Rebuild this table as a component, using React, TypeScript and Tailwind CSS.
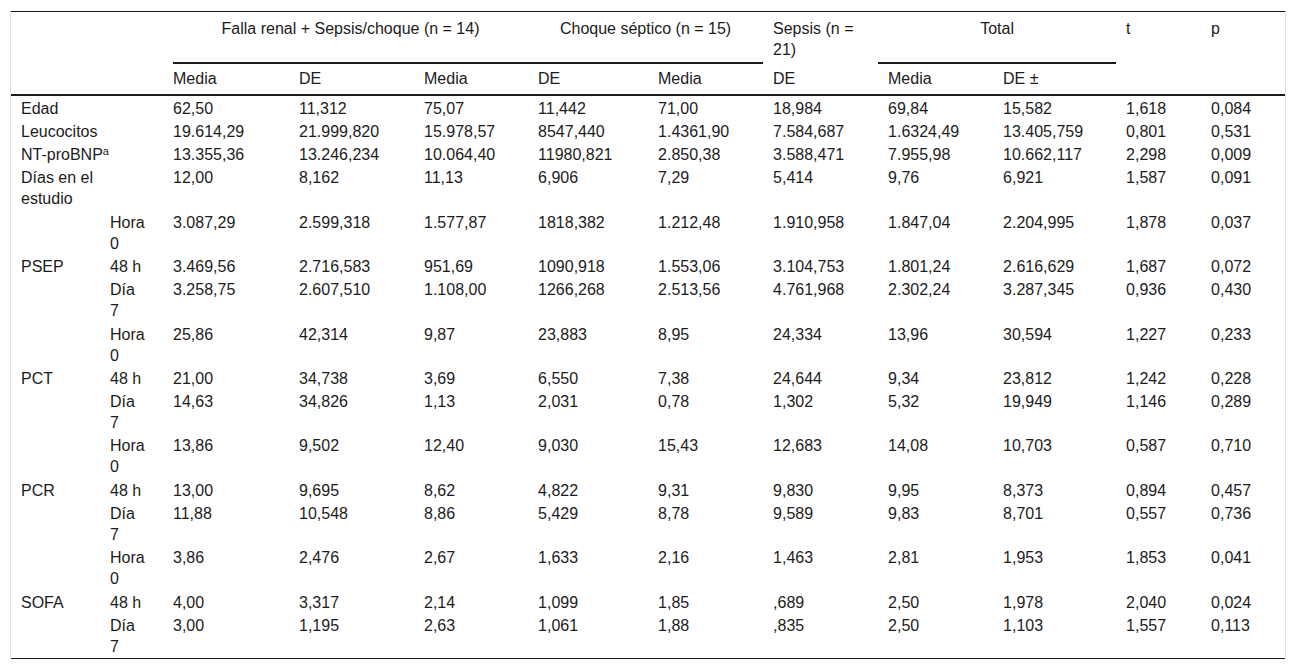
const cols = [
  { w: "w-[89px]", pad: "pl-[10px] pr-[4px]" },
  { w: "w-[73px]", pad: "pl-[10px] pr-[29px]" },
  { w: "w-[116px]", pad: "pl-0 pr-[8px]" },
  { w: "w-[125px]", pad: "pl-[10px] pr-[8px]" },
  { w: "w-[114px]", pad: "pl-[10px] pr-[8px]" },
  { w: "w-[120px]", pad: "pl-[10px] pr-[8px]" },
  { w: "w-[115px]", pad: "pl-[10px] pr-[8px]" },
  { w: "w-[115px]", pad: "pl-[10px] pr-[8px]" },
  { w: "w-[115px]", pad: "pl-[10px] pr-[8px]" },
  { w: "w-[123px]", pad: "pl-[10px] pr-[8px]" },
  { w: "w-[85px]", pad: "pl-[10px] pr-[8px]" },
  { w: "w-[84px]", pad: "pl-[10px] pr-[8px]" },
];

type Row = { label?: string; sub?: string; values: string[] };

const rows: Row[] = [
  { label: "Edad", values: ["62,50", "11,312", "75,07", "11,442", "71,00", "18,984", "69,84", "15,582", "1,618", "0,084"] },
  { label: "Leucocitos", values: ["19.614,29", "21.999,820", "15.978,57", "8547,440", "1.4361,90", "7.584,687", "1.6324,49", "13.405,759", "0,801", "0,531"] },
  { label: "NT-proBNP", values: ["13.355,36", "13.246,234", "10.064,40", "11980,821", "2.850,38", "3.588,471", "7.955,98", "10.662,117", "2,298", "0,009"] },
  { label: "Días en el estudio", values: ["12,00", "8,162", "11,13", "6,906", "7,29", "5,414", "9,76", "6,921", "1,587", "0,091"] },
  { sub: "Hora 0", values: ["3.087,29", "2.599,318", "1.577,87", "1818,382", "1.212,48", "1.910,958", "1.847,04", "2.204,995", "1,878", "0,037"] },
  { label: "PSEP", sub: "48 h", values: ["3.469,56", "2.716,583", "951,69", "1090,918", "1.553,06", "3.104,753", "1.801,24", "2.616,629", "1,687", "0,072"] },
  { sub: "Día 7", values: ["3.258,75", "2.607,510", "1.108,00", "1266,268", "2.513,56", "4.761,968", "2.302,24", "3.287,345", "0,936", "0,430"] },
  { sub: "Hora 0", values: ["25,86", "42,314", "9,87", "23,883", "8,95", "24,334", "13,96", "30,594", "1,227", "0,233"] },
  { label: "PCT", sub: "48 h", values: ["21,00", "34,738", "3,69", "6,550", "7,38", "24,644", "9,34", "23,812", "1,242", "0,228"] },
  { sub: "Día 7", values: ["14,63", "34,826", "1,13", "2,031", "0,78", "1,302", "5,32", "19,949", "1,146", "0,289"] },
  { sub: "Hora 0", values: ["13,86", "9,502", "12,40", "9,030", "15,43", "12,683", "14,08", "10,703", "0,587", "0,710"] },
  { label: "PCR", sub: "48 h", values: ["13,00", "9,695", "8,62", "4,822", "9,31", "9,830", "9,95", "8,373", "0,894", "0,457"] },
  { sub: "Día 7", values: ["11,88", "10,548", "8,86", "5,429", "8,78", "9,589", "9,83", "8,701", "0,557", "0,736"] },
  { sub: "Hora 0", values: ["3,86", "2,476", "2,67", "1,633", "2,16", "1,463", "2,81", "1,953", "1,853", "0,041"] },
  { label: "SOFA", sub: "48 h", values: ["4,00", "3,317", "2,14", "1,099", "1,85", ",689", "2,50", "1,978", "2,040", "0,024"] },
  { sub: "Día 7", values: ["3,00", "1,195", "2,63", "1,061", "1,88", ",835", "2,50", "1,103", "1,557", "0,113"] },
];

const subHeads = ["Media", "DE", "Media", "DE", "Media", "DE", "Media", "DE ±"];

const h1 = "pt-[5.5px] pb-[4.5px] align-top font-normal";
const h2 = "pt-[3.5px] pb-[5.5px] align-top font-normal text-left";
const line = "border-b-2 border-[#1c1c1c]";
const cell = "pt-[1.5px] pb-[0.8px] align-top";

export default function App() {
  return (
    <div className="min-h-screen bg-white px-[10px] pt-[11px] font-['Liberation_Sans',Arial,sans-serif] text-[16px] leading-[21px] text-[#1c1c1c]">
      <div className="border-x border-[#e4e4e4]">
        <table className="w-full table-fixed border-separate border-spacing-0 border-y border-[#1c1c1c]">
          <colgroup>
            {cols.map((c, i) => (
              <col key={i} className={c.w} />
            ))}
          </colgroup>
          <thead>
            <tr>
              <th colSpan={2} rowSpan={2} className={`${h1} ${line}`} />
              <th colSpan={3} className={`${h1} ${line} text-center`}>
                Falla renal + Sepsis/choque (n = 14)
              </th>
              <th colSpan={2} className={`${h1} ${line} text-center`}>
                Choque séptico (n = 15)
              </th>
              <th className={`${h1} text-left ${cols[7].pad}`}>Sepsis (n = 21)</th>
              <th colSpan={2} className={`${h1} ${line} text-center`}>
                Total
              </th>
              <th rowSpan={2} className={`${h1} ${line} text-left ${cols[10].pad}`}>
                t
              </th>
              <th rowSpan={2} className={`${h1} ${line} text-left ${cols[11].pad}`}>
                p
              </th>
            </tr>
            <tr>
              {subHeads.map((s, i) => (
                <th key={i} className={`${h2} ${line} ${cols[i + 2].pad}`}>
                  {s}
                </th>
              ))}
            </tr>
          </thead>
          <tbody>
            {rows.map((r, ri) => (
              <tr key={ri}>
                <td className={`${cell} ${cols[0].pad} ${r.label === "NT-proBNP" ? "whitespace-nowrap" : ""}`}>
                  {r.label}
                  {r.label === "NT-proBNP" && <sup className="text-[11px] leading-none">a</sup>}
                </td>
                <td className={`${cell} ${cols[1].pad}`}>{r.sub}</td>
                {r.values.map((v, vi) => (
                  <td key={vi} className={`${cell} ${cols[vi + 2].pad}`}>
                    {v}
                  </td>
                ))}
              </tr>
            ))}
          </tbody>
        </table>
      </div>
    </div>
  );
}
